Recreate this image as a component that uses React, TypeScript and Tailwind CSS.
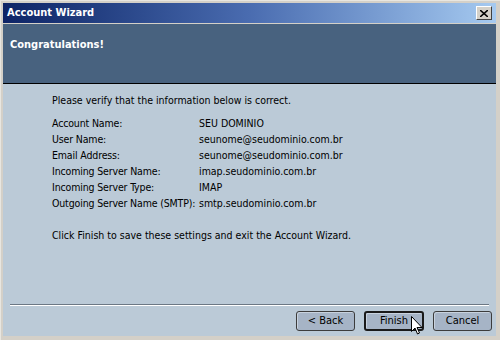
import React from 'react';

const rows: [string, string][] = [
    ['Account Name:', 'SEU DOMINIO'],
    ['User Name:', 'seunome@seudominio.com.br'],
    ['Email Address:', 'seunome@seudominio.com.br'],
    ['Incoming Server Name:', 'imap.seudominio.com.br'],
    ['Incoming Server Type:', 'IMAP'],
    ['Outgoing Server Name (SMTP):', 'smtp.seudominio.com.br'],
];

const Cursor: React.FC<React.SVGProps<SVGSVGElement>> = (props) => (
    <svg viewBox="0 0 12 19" {...props}>
        <path d="M0.5 0.5 L0.5 15.5 L4 12 L6.5 18 L8.5 17 L6 11.5 L11 11.5 Z" fill="#fff" stroke="#000" strokeWidth="1" />
    </svg>
);

const WizButton: React.FC<{ label: string; primary?: boolean }> = ({ label, primary }) => (
    <button
        className={
            'h-[20px] rounded-[3px] bg-[#a6b4c6] text-[11px] text-black leading-none shadow-[inset_1px_1px_0_#c8d2de] ' +
            (primary ? 'w-[60px] border-2 border-[#1a1a1a]' : 'w-[59px] border border-[#3c3c3c]')
        }
    >
        {label}
    </button>
);

const App: React.FC = () => {
    return (
        <div
            className="w-[500px] h-[340px] bg-[#d4d0c8] border-t border-l border-[#e8e6e0] flex flex-col p-[2px] pr-[4px] pb-[4px] text-black overflow-hidden"
            style={{ fontFamily: '"DejaVu Sans Condensed", "Liberation Sans", Arial, sans-serif' }}
        >
            {/* title bar */}
            <div className="h-[20px] flex items-center justify-between px-[4px] bg-gradient-to-r from-[#0e2466] via-[#4a6cb0] to-[#a6caf0]">
                <span className="text-white font-bold text-[11px]">Account Wizard</span>
                <div className="w-[16px] h-[14px] bg-[#d4d0c8] border border-t-white border-l-white border-r-[#404040] border-b-[#404040] flex items-center justify-center">
                    <svg viewBox="0 0 8 7" className="w-[8px] h-[7px]">
                        <path d="M0 0 L8 7 M8 0 L0 7" stroke="#000" strokeWidth="1.6" />
                    </svg>
                </div>
            </div>

            {/* header */}
            <div className="mt-px h-[60px] bg-[#48627f] border-b border-black px-[7px] pt-[7px]">
                <span className="text-white font-bold text-[11px]">Congratulations!</span>
            </div>

            {/* body */}
            <div className="relative flex-1 bg-[#bbcad7] flex flex-col text-[10.5px] whitespace-nowrap">
                <div className="pl-[49px] pt-[8px] flex flex-col">
                    <p className="leading-[16px]">Please verify that the information below is correct.</p>
                    <div className="mt-[7px] grid grid-cols-[147px_1fr] leading-[16px]">
                        {rows.map(([k, v]) => (
                            <React.Fragment key={k}>
                                <span className="tracking-[-0.15px]">{k}</span>
                                <span>{v}</span>
                            </React.Fragment>
                        ))}
                    </div>
                    <p className="mt-[16px] leading-[16px]">Click Finish to save these settings and exit the Account Wizard.</p>
                </div>

                <div className="mt-auto mx-[7px] border-t border-[#6c7884] border-b border-b-white" />
                <div className="h-[30px] flex items-center justify-end gap-[9px] pr-[4px] pb-[1px]">
                    <WizButton label="< Back" />
                    <WizButton label="Finish" primary />
                    <WizButton label="Cancel" />
                </div>
                <Cursor className="absolute left-[408px] top-[232px] w-[12px] h-[19px]" />
            </div>
        </div>
    );
};

export default App;
